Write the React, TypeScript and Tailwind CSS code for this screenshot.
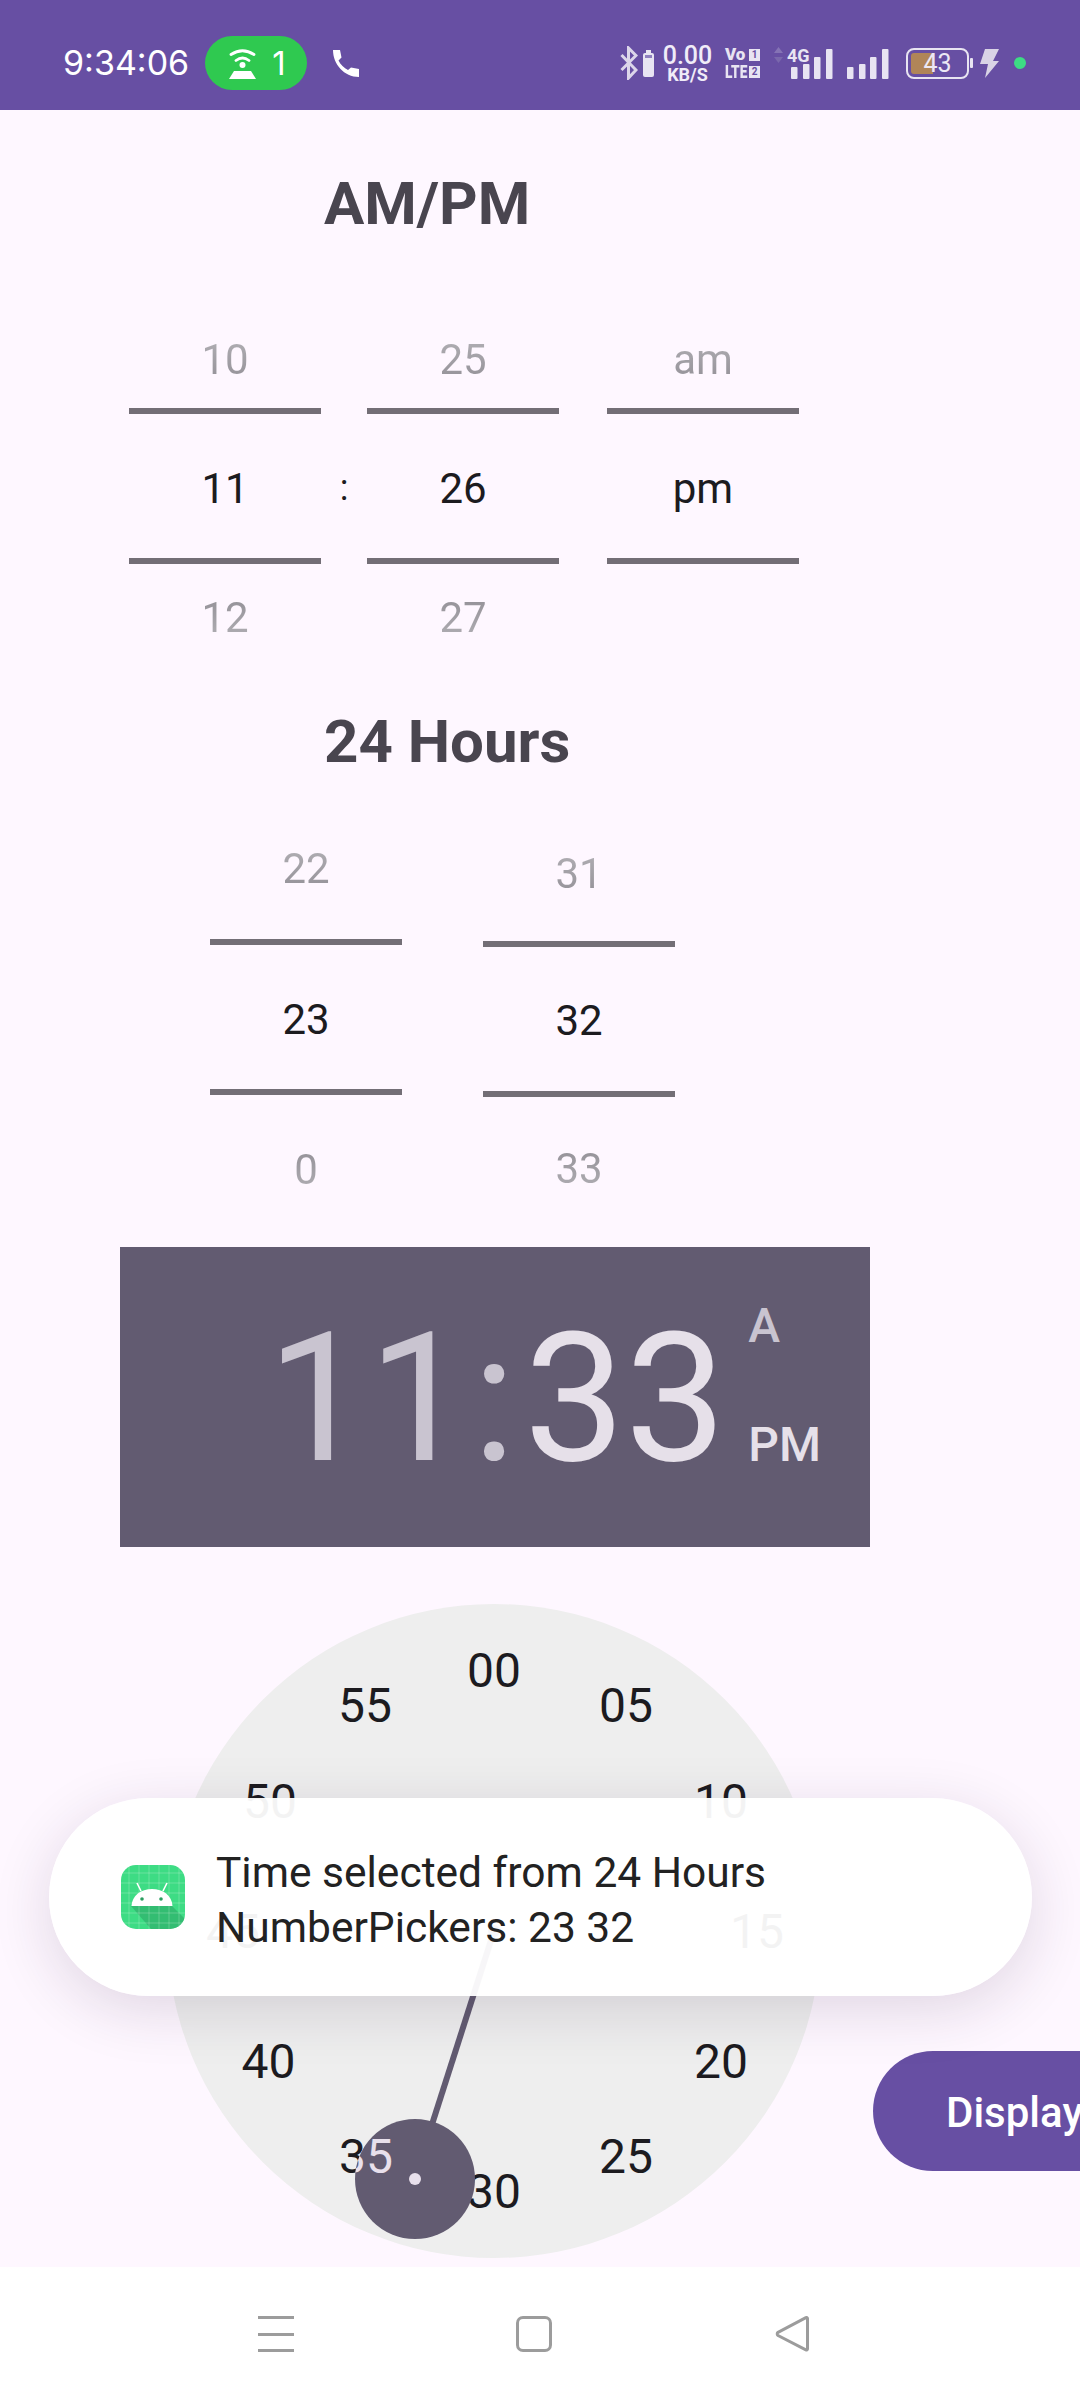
import React from "react";

const font = { fontFamily: "Roboto, sans-serif" };
const inter = { fontFamily: "Inter, sans-serif" };

function Faded({ children, dir }: { children: React.ReactNode; dir: "up" | "down" }) {
  return (
    <span
      className={
        dir === "up"
          ? "bg-linear-to-b from-[#b3b1b6] to-[#918e95] bg-clip-text text-transparent"
          : "bg-linear-to-b from-[#918e95] to-[#b3b1b6] bg-clip-text text-transparent"
      }
    >
      {children}
    </span>
  );
}

function Picker({
  top,
  mid,
  bottom,
  topCls,
  botCls,
  midCls = "pt-[6px]",
}: {
  top: string;
  mid: string;
  bottom?: string;
  topCls: string;
  botCls: string;
  midCls?: string;
}) {
  return (
    <div className="flex w-[192px] flex-col text-center text-[42px] leading-[50px]">
      <div className={`flex items-center justify-center ${topCls}`}>
        <Faded dir="up">{top}</Faded>
      </div>
      <div className={`flex h-[156px] items-center justify-center border-y-[6px] border-[#736e76] text-[#1c1b1f] ${midCls}`}>
        {mid}
      </div>
      <div className={`flex items-center justify-center ${botCls}`}>
        {bottom ? <Faded dir="down">{bottom}</Faded> : null}
      </div>
    </div>
  );
}

const minutes = [
  { t: "00", x: 494, y: 1670.5 },
  { t: "05", x: 626, y: 1705.5 },
  { t: "10", x: 721, y: 1801.5 },
  { t: "15", x: 757, y: 1931.5 },
  { t: "20", x: 721, y: 2061.5 },
  { t: "25", x: 626, y: 2156.5 },
  { t: "30", x: 494, y: 2191.5 },
  { t: "35", x: 366, y: 2156.5 },
  { t: "40", x: 268.5, y: 2061.5 },
  { t: "45", x: 233, y: 1931.5 },
  { t: "50", x: 270, y: 1801.5 },
  { t: "55", x: 365, y: 1705.5 },
];

const CLOCK_X = 167;
const CLOCK_Y = 1604;

function Bars() {
  return (
    <>
      {[
        [0, 20],
        [12, 17],
        [23, 10],
        [35, 2],
      ].map(([dx, y]) => (
        <rect key={dx} x={dx} y={y} width="6.5" height={32 - y} rx="1" fill="#e8e4f2" />
      ))}
    </>
  );
}

function AndroidIcon() {
  return (
    <svg width="64" height="64" viewBox="0 0 64 64" className="shrink-0">
      <defs>
        <clipPath id="ico">
          <rect width="64" height="64" rx="15" />
        </clipPath>
      </defs>
      <g clipPath="url(#ico)">
        <rect width="64" height="64" fill="#3ddc84" />
        <path d="M10 41h41l13 13v10H30z" fill="#2a9d5f" fillOpacity="0.5" />
        <path
          d="M8 0v64M18 0v64M28 0v64M38 0v64M48 0v64M58 0v64M0 8h64M0 18h64M0 28h64M0 38h64M0 48h64M0 58h64"
          stroke="#fff"
          strokeOpacity="0.22"
          strokeWidth="1"
        />
        <path d="M10.500 41c.5-10.500 9.500-17 20.500-17s20 6.500 20.500 17z" fill="#fff" />
        <path d="M20 26l-4-8M42 26l4-8" stroke="#fff" strokeWidth="1.600" />
        <circle cx="21" cy="34" r="1.800" fill="#2a9d5f" />
        <circle cx="40" cy="34" r="1.800" fill="#2a9d5f" />
      </g>
    </svg>
  );
}

function StatusBar() {
  const c = "#e8e4f2";
  return (
    <div className="flex h-[110px] shrink-0 items-center bg-[#674fa3] pl-[63px] pt-[16px]">
      <span className="w-[127px] text-[34px] leading-none text-white" style={inter}>
        9:34:06
      </span>
      <div className="ml-[15px] flex h-[54px] w-[102px] items-center justify-center gap-[15px] rounded-full bg-[#2fc950] pl-[2px]">
        <svg width="29" height="31" viewBox="0 0 29 31" fill="none">
          <path d="M3 6.500Q14.500-1 26 6.500M8 12.500Q14.500 7.500 21 12.500" stroke="#fff" strokeWidth="2.800" strokeLinecap="round" />
          <circle cx="14.500" cy="17" r="3" fill="#fff" />
          <path d="M6 23h17l5 8H1z" fill="#fff" />
        </svg>
        <span className="text-[33px] leading-none text-white" style={inter}>
          1
        </span>
      </div>
      <svg className="ml-[25px]" width="27" height="27" viewBox="0 0 27 27" fill="#fff">
        <path d="M1 0h7l1.500 7.500-3 3c2 4 5.500 7.500 9.500 9.500l3-2.500 8 1.500v8C12 27 1 14 1 0z" />
      </svg>

      <div className="ml-auto flex items-center pr-[54px]">
        <svg width="18" height="34" viewBox="0 0 18 34" fill="none">
          <path d="M1.500 9L16 24l-7.500 8V2L16 9.500 1.500 24" stroke="#dcd6ea" strokeWidth="3" />
        </svg>
        <svg className="ml-[5px]" width="11" height="27" viewBox="0 0 11 27">
          <rect x="3" y="0" width="5" height="3" fill={c} />
          <rect x="0" y="3" width="11" height="24" rx="2" fill={c} />
          <rect x="2" y="5" width="7" height="3" fill="#8f7fbf" />
        </svg>
        <div className="ml-[8px] flex w-[51px] flex-col items-center text-[#f0ecf8]">
          <span className="text-[25px] font-medium leading-[25px]">0.00</span>
          <span className="mt-[-2px] text-[18px] font-bold leading-[18px]">KB/S</span>
        </div>
        <div className="ml-[12px] flex w-[35px] flex-col gap-[4px] text-[#e8e4f2]">
          <div className="flex h-[13px] items-center justify-between">
            <span className="text-[17px] font-black leading-[13px]">Vo</span>
            <span className="flex h-[12px] w-[11px] items-center justify-center bg-[#e8e4f2] text-[10px] font-bold leading-none text-[#674fa3]">
              1
            </span>
          </div>
          <div className="flex h-[13px] items-center">
            <span className="w-[24px] origin-left scale-x-[0.76] text-[18px] font-black leading-[13px]">LTE</span>
            <span className="flex h-[12px] w-[11px] items-center justify-center bg-[#e8e4f2] text-[10px] font-bold leading-none text-[#674fa3]">
              2
            </span>
          </div>
        </div>
        <div className="relative ml-[14px] h-[32px] w-[59px]">
          <svg width="59" height="32" viewBox="0 0 59 32">
            <path d="M4.500 0L9 6H0z" fill="#8573b5" />
            <path d="M4.500 16L9 10H0z" fill="#7a68ac" />
            <g transform="translate(17 0)">
              <Bars />
            </g>
          </svg>
          <span className="absolute left-[13px] top-[0px] text-[18px] font-bold leading-[18px] text-[#e8e4f2]">4G</span>
        </div>
        <svg className="ml-[14px] mt-[-1px]" width="43" height="32" viewBox="0 0 43 32">
          <Bars />
        </svg>
        <div className="relative ml-[16px] h-[31px] w-[67px]">
          <svg width="67" height="31" viewBox="0 0 67 31" fill="none">
            <rect x="1" y="1" width="61" height="29" rx="7" stroke={c} strokeWidth="2" />
            <path d="M8 5h19v21H8a3 3 0 0 1-3-3V8a3 3 0 0 1 3-3z" fill="#b08558" />
            <rect x="64" y="10" width="3" height="10" rx="1" fill={c} />
          </svg>
          <span className="absolute inset-y-0 left-0 flex w-[63px] items-center justify-center text-[25px] leading-none text-[#ece8f4]">
            43
          </span>
        </div>
        <svg className="ml-[7px]" width="19" height="29" viewBox="0 0 19 29" fill="#d9d3e6">
          <path d="M5 0h14l-6 12h6L5 29l3-14H0z" />
        </svg>
        <div className="ml-[15px] h-[12px] w-[12px] rounded-full bg-[#3ddc84]" />
      </div>
    </div>
  );
}

function Clock() {
  const sx = 414.5 - CLOCK_X;
  const sy = 2179 - CLOCK_Y;
  return (
    <div className="relative h-[654px] w-[654px] shrink-0 rounded-full bg-[#eeeeee]">
      {minutes.map((m) => (
        <span
          key={m.t}
          className="absolute -translate-x-1/2 -translate-y-1/2 text-[48px] leading-[56px] text-[#1c1b1f]"
          style={{ left: m.x - CLOCK_X, top: m.y - CLOCK_Y }}
        >
          {m.t}
        </span>
      ))}
      <svg className="absolute left-0 top-0" width="654" height="654" viewBox="0 0 654 654" fill="none">
        <line x1="327" y1="327" x2={sx} y2={sy} stroke="#625b71" strokeWidth="6" />
        <circle cx="327" cy="327" r="6" fill="#625b71" />
      </svg>
      <div
        className="absolute h-[120px] w-[120px] overflow-hidden rounded-full bg-[#625b71]"
        style={{ left: sx - 60, top: sy - 60 }}
      >
        <span
          className="absolute -translate-x-1/2 -translate-y-1/2 text-[48px] leading-[56px] text-[#e8e0ec]"
          style={{ left: 366 - 414.5 + 60, top: 2156.5 - 2179 + 60 }}
        >
          35
        </span>
        <div className="absolute left-[54px] top-[54px] h-[12px] w-[12px] rounded-full bg-[#e8e0ec]" />
      </div>
    </div>
  );
}

export default function App() {
  return (
    <div className="relative flex h-[2400px] w-[1080px] flex-col overflow-hidden bg-[#fef7ff]" style={font}>
      <StatusBar />

      <main className="flex flex-1 flex-col overflow-hidden">
        <h1 className="ml-[324px] mt-[61px] text-[60px] font-bold leading-[66px] text-[#49454f]">AM/PM</h1>
        <div className="ml-[129px] mt-[71px] flex">
          <Picker top="10" mid="11" bottom="12" topCls="h-[100px] pt-[3px]" botCls="h-[106px] pt-[2px]" />
          <div className="flex w-[46px] items-center justify-center pb-[2px] text-[36px] text-[#1c1b1f]">:</div>
          <Picker top="25" mid="26" bottom="27" topCls="h-[100px] pt-[3px]" botCls="h-[106px] pt-[2px]" />
          <div className="w-[48px]" />
          <Picker top="am" mid="pm" topCls="h-[100px] pt-[3px]" botCls="h-[106px]" />
        </div>

        <h2 className="ml-[324px] mt-[39px] text-[60px] font-bold leading-[66px] text-[#49454f]">24 Hours</h2>
        <div className="ml-[210px] mt-[22px] flex gap-[81px]">
          <Picker top="22" mid="23" bottom="0" topCls="h-[142px] pt-[1px]" botCls="h-[150px]" />
          <Picker top="31" mid="32" bottom="33" topCls="h-[144px] pt-[9px]" botCls="h-[142px] pt-[2px]" midCls="pt-[4px]" />
        </div>

        <div className="ml-[120px] mt-[2px] flex h-[300px] w-[750px] shrink-0 items-center bg-[#625b71] pl-[147px] pt-[3px]">
          <span className="text-[180px] leading-[211px] text-[#c9c4d0]">11</span>
          <span className="ml-[3px] text-[180px] leading-[211px] text-[#c9c4d0]">:</span>
          <span className="ml-[8px] text-[180px] leading-[211px] text-[#e6e0e9]">33</span>
          <div className="mb-[27px] ml-[22px] flex flex-col gap-[63px] text-[48px] font-medium leading-[56px]">
            <span className="text-[#c9c4d0]">A</span>
            <span className="text-[#e6e0e9]">PM</span>
          </div>
        </div>

        <div className="ml-[167px] mt-[57px] flex items-start">
          <Clock />
          <div className="ml-[52px] mt-[447px] flex h-[120px] w-[400px] shrink-0 items-center rounded-full bg-[#674fa3] pl-[73px] pt-[2px] text-[42px] font-medium text-white">
            Display
          </div>
        </div>
      </main>

      {/* toast floating over the content */}
      <div className="absolute left-[49px] top-[1798px] flex h-[198px] w-[983px] items-center gap-[31px] rounded-full bg-white/95 pl-[72px] shadow-[0_14px_60px_rgba(40,20,60,0.14)]">
        <AndroidIcon />
        <div className="pt-[5px] text-[42.500px] font-[450] leading-[55px] text-[#222222]">
          <div>Time selected from 24 Hours</div>
          <div>NumberPickers: 23 32</div>
        </div>
      </div>

      {/* navigation bar */}
      <div className="flex h-[133px] shrink-0 items-start gap-[222px] bg-white pl-[258px] pt-[49px]">
        <div className="flex h-[36px] w-[36px] flex-col justify-between">
          <div className="h-[3px] bg-[#9c9c9c]" />
          <div className="h-[3px] bg-[#9c9c9c]" />
          <div className="h-[3px] bg-[#9c9c9c]" />
        </div>
        <div className="h-[36px] w-[36px] rounded-[7px] border-[3px] border-[#9c9c9c]" />
        <svg width="36" height="36" viewBox="0 0 36 36" fill="none" className="ml-[1px]">
          <path d="M32.500 2.500V33a1 1 0 0 1-1.600.8L3 19.500a2 2 0 0 1 0-3.200L30.900 1.700a1 1 0 0 1 1.600.8z" stroke="#9c9c9c" strokeWidth="3" strokeLinejoin="round" />
        </svg>
      </div>
    </div>
  );
}
